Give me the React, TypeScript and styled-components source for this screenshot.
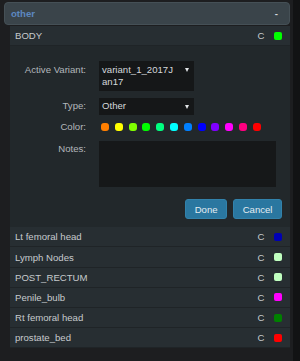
import React from "react";
import styled, { createGlobalStyle } from "styled-components";

interface Structure {
  name: string;
  color: string;
}

const SWATCHES = [
  "#ff7f00",
  "#ffff00",
  "#80ff00",
  "#00ff00",
  "#00ff80",
  "#00ffff",
  "#0080ff",
  "#0000ff",
  "#8000ff",
  "#ff00ff",
  "#ff0080",
  "#ff0000",
];

const OTHERS: Structure[] = [
  { name: "Lt femoral head", color: "#0000b4" },
  { name: "Lymph Nodes", color: "#c0ffc0" },
  { name: "POST_RECTUM", color: "#c0ffc0" },
  { name: "Penile_bulb", color: "#ff00ff" },
  { name: "Rt femoral head", color: "#008000" },
  { name: "prostate_bed", color: "#ff0000" },
];

const GlobalStyle = createGlobalStyle`
  html, body {
    margin: 0;
    padding: 0;
    background: #1d1e20;
  }
  body {
    font-family: "Liberation Sans", Arial, sans-serif;
  }
`;

const Page = styled.div`
  display: flex;
  width: 300px;
  height: 361px;
  overflow: hidden;
`;

const Main = styled.div`
  flex: 1;
  display: flex;
  flex-direction: column;
  padding: 2px 3px 0 4px;
`;

const ScrollStrip = styled.div`
  width: 7px;
  background: #121314;
`;

const GroupHeader = styled.div`
  display: flex;
  align-items: center;
  justify-content: space-between;
  box-sizing: border-box;
  height: 23px;
  padding: 0 11px 0 6px;
  background: #3a444a;
  border: 1px solid #455056;
  border-radius: 4px;
`;

const GroupTitle = styled.span`
  font-size: 9.6px;
  font-weight: bold;
  color: #5d88c0;
`;

const Collapse = styled.span`
  font-size: 9.6px;
  font-weight: bold;
  color: #d6d9dc;
`;

const List = styled.div`
  margin: 1px 0 0 6px;
  background: #22282b;
`;

const Row = styled.div`
  display: flex;
  align-items: center;
  height: 19.2px;
  padding: 0 8px 0 5px;
  background: #272e32;
  border-bottom: 1px solid #1f2427;
  font-size: 9.6px;
  color: #c6cacd;
`;

const RowName = styled.span`
  flex: 1;
`;

const Swatch = styled.span<{ $color: string }>`
  width: 8px;
  height: 8px;
  margin-left: 9.5px;
  border-radius: 2px;
  background: ${(p) => p.$color};
`;

const Editor = styled.div`
  padding: 15px 8px 8.5px 0;
  background: #22282b;
`;

const Field = styled.div<{ $gap?: number; $center?: boolean }>`
  display: grid;
  grid-template-columns: 76px 1fr;
  column-gap: 13px;
  align-items: ${(p) => (p.$center ? "center" : "start")};
  margin-top: ${(p) => p.$gap ?? 0}px;
`;

const Label = styled.div<{ $center?: boolean }>`
  text-align: right;
  font-size: 9.6px;
  line-height: 12.5px;
  padding-top: ${(p) => (p.$center ? 0 : 2.5)}px;
  color: #b2b7bb;
`;

const Select = styled.div`
  display: flex;
  justify-content: space-between;
  align-items: flex-start;
  box-sizing: border-box;
  width: 95px;
  padding: 2.5px 5.5px 2px 3px;
  background: #151718;
  color: #d4d8db;
`;

const SelectText = styled.span`
  width: 71px;
  font-size: 9.6px;
  line-height: 12.5px;
  word-break: break-all;
`;

const Caret = styled.span`
  width: 0;
  height: 0;
  margin-top: 4.5px;
  border-left: 2.5px solid transparent;
  border-right: 2.5px solid transparent;
  border-top: 4px solid #e2e5e7;
`;

const Palette = styled.div`
  display: flex;
  align-items: center;
  gap: 5.8px;
  padding-left: 2px;
`;

const Dot = styled.span<{ $color: string }>`
  width: 8px;
  height: 8px;
  border-radius: 3px;
  background: ${(p) => p.$color};
`;

const Notes = styled.textarea`
  display: block;
  box-sizing: border-box;
  width: 177px;
  height: 46px;
  margin: 0;
  padding: 3px;
  resize: none;
  border: none;
  outline: none;
  background: #161819;
  color: #d4d8db;
  font-family: inherit;
  font-size: 9.6px;
`;

const Actions = styled.div`
  display: flex;
  justify-content: flex-end;
  gap: 6px;
  margin-top: 12.6px;
`;

const Button = styled.button`
  box-sizing: border-box;
  height: 19.5px;
  padding: 0 8.5px;
  border: 1px solid #3282ab;
  border-radius: 3px;
  background: #2a77a0;
  color: #e4edf2;
  font-family: inherit;
  font-size: 9.6px;
  cursor: pointer;
`;

export default function App() {
  return (
    <>
      <GlobalStyle />
      <Page>
        <Main>
          <GroupHeader>
            <GroupTitle>other</GroupTitle>
            <Collapse>-</Collapse>
          </GroupHeader>
          <List>
            <Row>
              <RowName>BODY</RowName>
              C
              <Swatch $color="#00ff00" />
            </Row>
            <Editor>
              <Field>
                <Label>Active Variant:</Label>
                <Select>
                  <SelectText>variant_1_2017Jan17</SelectText>
                  <Caret />
                </Select>
              </Field>
              <Field $gap={7}>
                <Label>Type:</Label>
                <Select>
                  <SelectText>Other</SelectText>
                  <Caret />
                </Select>
              </Field>
              <Field $gap={6} $center>
                <Label $center>Color:</Label>
                <Palette>
                  {SWATCHES.map((c) => (
                    <Dot key={c} $color={c} />
                  ))}
                </Palette>
              </Field>
              <Field $gap={7.5}>
                <Label>Notes:</Label>
                <Notes />
              </Field>
              <Actions>
                <Button>Done</Button>
                <Button>Cancel</Button>
              </Actions>
            </Editor>
            {OTHERS.map((s) => (
              <Row key={s.name}>
                <RowName>{s.name}</RowName>
                C
                <Swatch $color={s.color} />
              </Row>
            ))}
          </List>
        </Main>
        <ScrollStrip />
      </Page>
    </>
  );
}
